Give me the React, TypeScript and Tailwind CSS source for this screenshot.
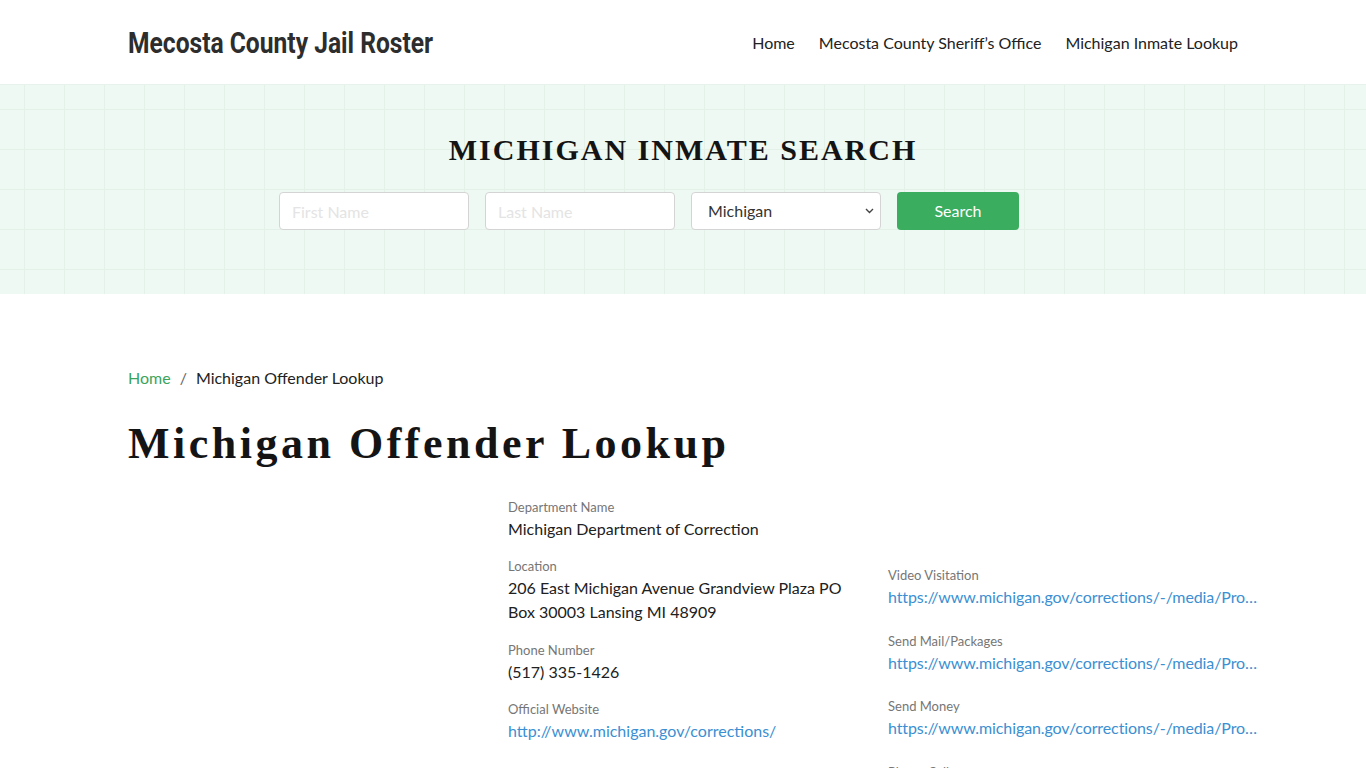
import React from "react";

const lato = { fontFamily: "Lato, 'Open Sans', sans-serif" };

function Item({ label, value, link, truncate }: { label: string; value: React.ReactNode; link?: boolean; truncate?: boolean }) {
  return (
    <div className="mb-[16px]">
      <div className="text-[13px] leading-[18px] text-[#767676]">{label}</div>
      <div
        className={
          "text-[16px] leading-[24px] mt-[1px] " +
          (link ? "text-[#3b8fd2] " : "text-[#212121] ") +
          (truncate ? "whitespace-nowrap overflow-hidden text-ellipsis tracking-[-0.1px]" : "")
        }
      >
        {value}
      </div>
    </div>
  );
}

export default function App() {
  const url = "https://www.michigan.gov/corrections/-/media/Project/Websites/corrections/Files/Visitation.pdf";
  return (
    <div className="min-h-screen bg-white" style={lato}>
      <header className="h-[84px] bg-white">
        <div className="w-[1110px] mx-auto h-full flex items-center justify-between">
          <div
            className="text-[30px] leading-[36px] font-bold text-[#2d2d2d] scale-x-[0.82] origin-left whitespace-nowrap mt-[2px]"
            style={{ fontFamily: "Roboto, 'Liberation Sans', sans-serif" }}
          >
            Mecosta County Jail Roster
          </div>
          <nav className="flex items-center gap-[24px] text-[16px] text-[#222] mt-[1px]">
            <span>Home</span>
            <span>Mecosta County Sheriff’s Office</span>
            <span>Michigan Inmate Lookup</span>
          </nav>
        </div>
      </header>

      <section
        className="h-[210px] bg-[#edf9f2] bg-[image:linear-gradient(to_right,#e3f1e8_1px,transparent_1px),linear-gradient(to_bottom,#e3f1e8_1px,transparent_1px)] bg-[size:40px_40px] bg-[position:24px_-16px] border-t border-[#e8f2ec] flex flex-col items-center"
      >
        <h2
          className="mt-[47px] text-[30px] leading-[36px] font-bold tracking-[2px] text-[#141414] uppercase"
          style={{ fontFamily: "'Liberation Serif', 'DejaVu Serif', serif" }}
        >
          Michigan Inmate Search
        </h2>
        <div className="w-[808px] mt-[24px] flex gap-[16px]">
          <input
            placeholder="First Name"
            className="w-[190px] h-[38px] rounded-[4px] border border-[#d4d4d4] bg-white px-[12px] text-[16px] placeholder:text-[#e4e4e4] outline-none"
          />
          <input
            placeholder="Last Name"
            className="w-[190px] h-[38px] rounded-[4px] border border-[#d4d4d4] bg-white px-[12px] text-[16px] placeholder:text-[#e4e4e4] outline-none"
          />
          <div className="relative w-[190px] h-[38px] rounded-[4px] border border-[#d4d4d4] bg-white flex items-center pl-[16px] text-[16px] text-[#333]">
            Michigan
            <svg className="absolute right-[6px] top-[15px]" width="9" height="6" viewBox="0 0 9 6">
              <path d="M1 1l3.5 3.5L8 1" fill="none" stroke="#444" strokeWidth="1.4" />
            </svg>
          </div>
          <button className="w-[122px] h-[38px] rounded-[4px] bg-[#3aad5f] text-white text-[16px]">Search</button>
        </div>
      </section>

      <main className="w-[1110px] mx-auto pt-[74px]">
        <div className="flex items-center text-[16px] leading-[20px]">
          <span className="text-[#3aa45d]">Home</span>
          <span className="text-[#666] px-[9px]">/</span>
          <span className="text-[#222]">Michigan Offender Lookup</span>
        </div>
        <h1
          className="mt-[30px] text-[44px] leading-[52px] font-bold tracking-[3.5px] text-[#141414] whitespace-nowrap"
          style={{ fontFamily: "'Liberation Serif', 'DejaVu Serif', serif" }}
        >
          Michigan Offender Lookup
        </h1>
        <div className="flex mt-[28px]">
          <div className="w-[380px] shrink-0" />
          <div className="w-[345px] shrink-0">
            <Item label="Department Name" value="Michigan Department of Correction" />
            <div className="mb-[17px]"><Item label="Location" value="206 East Michigan Avenue Grandview Plaza PO Box 30003 Lansing MI 48909" /></div>
            <Item label="Phone Number" value="(517) 335-1426" />
            <Item label="Official Website" value="http://www.michigan.gov/corrections/" link />
          </div>
          <div className="ml-[35px] w-[371px] shrink-0 pt-[68px]">
            <div className="mb-[23px]"><Item label="Video Visitation" value={url} link truncate /></div>
            <div className="mb-[22px]"><Item label="Send Mail/Packages" value={url} link truncate /></div>
            <div className="mb-[23px]"><Item label="Send Money" value={url} link truncate /></div>
            <Item label="Phone Calls" value={url} link truncate />
          </div>
        </div>
      </main>
    </div>
  );
}
